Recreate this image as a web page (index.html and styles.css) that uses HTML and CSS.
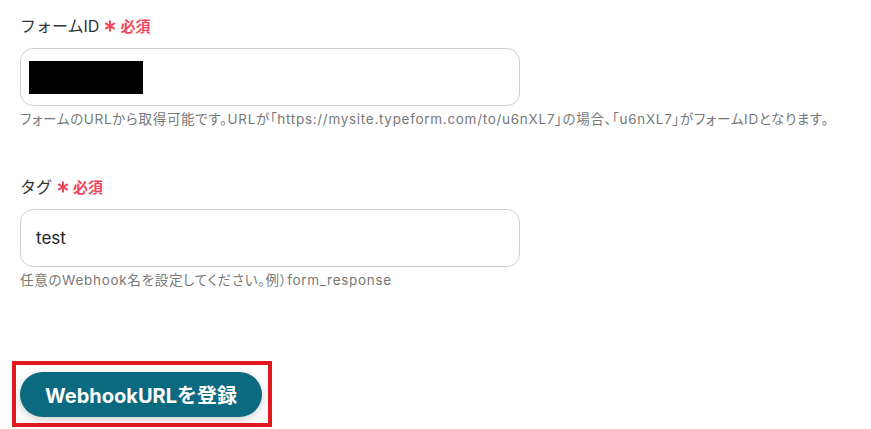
FILE: index.html
```html
<!DOCTYPE html>
<html lang="ja">
<head>
    <meta charset="UTF-8">
    <meta name="viewport" content="width=device-width, initial-scale=1.0">
    <title>Webhook設定</title>
    <link rel="stylesheet" href="styles.css">
</head>
<body>

    <div class="form">
        <!-- フォームID -->
        <div class="field">
            <label class="field-label">フォームID
                <svg class="req-mark" viewBox="0 0 12 12" width="12" height="12"><path d="M6 0.5V11.5M1.2 3.2L10.8 8.8M1.2 8.8L10.8 3.2" stroke="currentColor" stroke-width="2" fill="none"/></svg>
                <span class="req-text">必須</span>
            </label>
            <div class="text-box">
                <span class="masked"></span>
            </div>
            <p class="help">フォームのURLから取得可能です。URLが「https://mysite.typeform.com/to/u6nXL7」の場合、「u6nXL7」がフォームIDとなります。</p>
        </div>

        <!-- タグ -->
        <div class="field field-tag">
            <label class="field-label">タグ
                <svg class="req-mark" viewBox="0 0 12 12" width="12" height="12"><path d="M6 0.5V11.5M1.2 3.2L10.8 8.8M1.2 8.8L10.8 3.2" stroke="currentColor" stroke-width="2" fill="none"/></svg>
                <span class="req-text">必須</span>
            </label>
            <div class="text-box">test</div>
            <p class="help">任意のWebhook名を設定してください。例）form_response</p>
        </div>

        <div class="highlight">
            <button class="submit-button">WebhookURLを登録</button>
        </div>
    </div>

</body>
</html>
```

FILE: styles.css
```css
/* General Styling */
html, body {
    overflow: hidden;
}

body {
    font-family: 'Inter', 'Noto Sans CJK JP', sans-serif;
    background: #ffffff;
    margin: 0;
    padding: 0;
    color: #333333;
}

.form {
    padding: 13px 0 0 20px;
}

.field-label {
    display: flex;
    align-items: center;
    height: 24px;
    font-size: 16px;
    color: #333333;
    margin-bottom: 11px;
}

.req-mark {
    color: #f0465a;
    margin: 2px 4px 0 5px;
}

.req-text {
    color: #f0465a;
    font-size: 15px;
    font-weight: bold;
}

.text-box {
    box-sizing: border-box;
    width: 500px;
    height: 58px;
    border: 1px solid #cfcfcf;
    border-radius: 13px;
    padding: 0 15px;
    display: flex;
    align-items: center;
    font-size: 17px;
    color: #222222;
}

.masked {
    display: block;
    width: 114px;
    height: 33px;
    margin-left: -7px;
    background: #000000;
}

.help {
    margin: 3px 0 0;
    font-size: 13.5px;
    line-height: 20px;
    letter-spacing: 0.7px;
    font-feature-settings: "palt";
    color: #777777;
    white-space: nowrap;
}

.field-tag {
    margin-top: 45px;
}

/* Button */
.highlight {
    display: inline-block;
    margin: 71px 0 0 -8px;
    border: 4px solid #e3191f;
    padding: 7px 6px 6px 4px;
}

.submit-button {
    display: block;
    width: 242px;
    height: 45px;
    border: none;
    border-radius: 23px;
    background-color: #0c6a80;
    color: #ffffff;
    font-family: 'Inter', 'Noto Sans CJK JP', sans-serif;
    font-size: 20px;
    font-weight: bold;
    box-shadow: 0 3px 10px rgba(0, 0, 0, 0.18);
}
```
